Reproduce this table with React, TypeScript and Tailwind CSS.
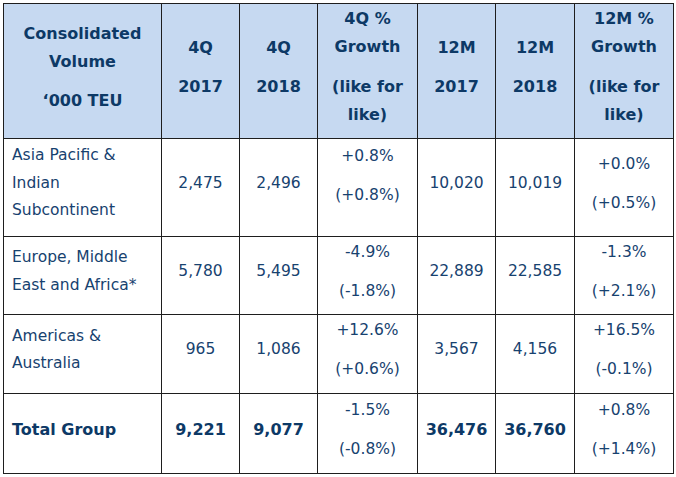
import * as React from "react";

type Row = {
  region: string[];
  q17: string;
  q18: string;
  qGrowth: string[];
  m17: string;
  m18: string;
  mGrowth: string[];
  bold?: boolean;
  height: string;
};

const rows: Row[] = [
  {
    region: ["Asia Pacific &", "Indian", "Subcontinent"],
    q17: "2,475",
    q18: "2,496",
    qGrowth: ["+0.8%", "(+0.8%)"],
    m17: "10,020",
    m18: "10,019",
    mGrowth: ["+0.0%", "(+0.5%)"],
    height: "h-[98px]",
  },
  {
    region: ["Europe, Middle", "East and Africa*"],
    q17: "5,780",
    q18: "5,495",
    qGrowth: ["-4.9%", "(-1.8%)"],
    m17: "22,889",
    m18: "22,585",
    mGrowth: ["-1.3%", "(+2.1%)"],
    height: "h-[78px]",
  },
  {
    region: ["Americas &", "Australia"],
    q17: "965",
    q18: "1,086",
    qGrowth: ["+12.6%", "(+0.6%)"],
    m17: "3,567",
    m18: "4,156",
    mGrowth: ["+16.5%", "(-0.1%)"],
    height: "h-[79px]",
  },
  {
    region: ["Total Group"],
    q17: "9,221",
    q18: "9,077",
    qGrowth: ["-1.5%", "(-0.8%)"],
    m17: "36,476",
    m18: "36,760",
    mGrowth: ["+0.8%", "(+1.4%)"],
    bold: true,
    height: "h-[80px]",
  },
];

// paragraphs stacked with word-style spacing between them
function Paras({ items, className = "" }: { items: string[]; className?: string }) {
  return (
    <div className={`flex flex-col gap-[12px] ${className}`}>
      {items.map((t) => (
        <p key={t} className="leading-[27px]">
          {t}
        </p>
      ))}
    </div>
  );
}

const cell = "border border-[#1e1e1e] align-middle pb-[8px]";
const head = `${cell} bg-[#c6d9f1] font-bold text-center text-[16px]`;
const strong = "font-bold text-[16px] text-[#0d3966]";

export default function App() {
  return (
    <div className="min-h-[477px] w-[676px] bg-white pt-[3px] pl-[3px] font-['DejaVu_Sans',sans-serif] text-[15.5px] text-[#17426f]">
      <table className="table-fixed border-collapse w-[670px]">
        <colgroup>
          <col className="w-[158px]" />
          <col className="w-[78px]" />
          <col className="w-[78px]" />
          <col className="w-[100px]" />
          <col className="w-[78px]" />
          <col className="w-[79px]" />
          <col className="w-[99px]" />
        </colgroup>
        <thead>
          <tr className="h-[135px] text-[#0d3966]">
            <th className={head}>
              <div className="flex flex-col gap-[11px]">
                <p className="leading-[28px]">
                  Consolidated
                  <br />
                  Volume
                </p>
                <p className="leading-[28px]">‘000 TEU</p>
              </div>
            </th>
            <th className={head}>
              <Paras items={["4Q", "2017"]} />
            </th>
            <th className={head}>
              <Paras items={["4Q", "2018"]} />
            </th>
            <th className={head}>
              <div className="flex flex-col gap-[12px]">
                <p className="leading-[28px]">
                  4Q %<br />
                  Growth
                </p>
                <p className="leading-[28px]">
                  (like for
                  <br />
                  like)
                </p>
              </div>
            </th>
            <th className={head}>
              <Paras items={["12M", "2017"]} />
            </th>
            <th className={head}>
              <Paras items={["12M", "2018"]} />
            </th>
            <th className={head}>
              <div className="flex flex-col gap-[12px]">
                <p className="leading-[28px]">
                  12M %<br />
                  Growth
                </p>
                <p className="leading-[28px]">
                  (like for
                  <br />
                  like)
                </p>
              </div>
            </th>
          </tr>
        </thead>
        <tbody>
          {rows.map((r, i) => (
            <tr key={r.q17} className={r.height}>
              <td className={`${cell} pl-[8px] ${r.bold ? strong : ""}`}>
                <div className="flex flex-col">
                  {r.region.map((t) => (
                    <p key={t} className="leading-[27.5px]">
                      {t}
                    </p>
                  ))}
                </div>
              </td>
              <td className={`${cell} text-center ${r.bold ? strong : ""}`}>{r.q17}</td>
              <td className={`${cell} text-center ${r.bold ? strong : ""}`}>{r.q18}</td>
              <td className={`${cell} text-center ${i === 0 ? "pb-[24px]" : ""}`}>
                <Paras items={r.qGrowth} />
              </td>
              <td className={`${cell} text-center ${r.bold ? strong : ""}`}>{r.m17}</td>
              <td className={`${cell} text-center ${r.bold ? strong : ""}`}>{r.m18}</td>
              <td className={`${cell} text-center`}>
                <Paras items={r.mGrowth} />
              </td>
            </tr>
          ))}
        </tbody>
      </table>
    </div>
  );
}
